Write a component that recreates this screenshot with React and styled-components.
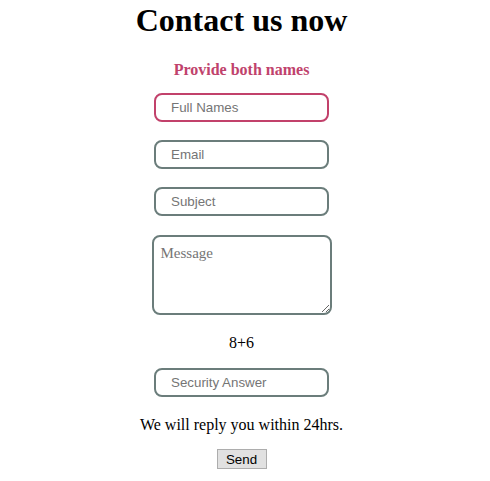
import styled, { createGlobalStyle } from "styled-components";

const GlobalStyle = createGlobalStyle`
  body {
    margin: 0;
    background: #fff;
    font-family: "Liberation Serif", "Times New Roman", serif;
    color: #000;
  }
`;

const ContactStyle = styled.form`
  display: flex;
  flex-direction: column;
  align-items: center;
  padding-right: 7px;

  h1 {
    font-size: 32px;
    font-weight: 700;
    line-height: 37px;
    margin: 2px 0 22px;
  }

  h2 {
    font-size: 16px;
    font-weight: 700;
    line-height: 18px;
    color: #c0426c;
    margin: 0 0 14px;
  }
`;

const Note = styled.p`
  font-size: 16px;
  line-height: 18px;
  margin: 0 0 ${(p) => p.$gap}px;
`;

const Field = styled.input`
  box-sizing: border-box;
  width: 175px;
  height: 29px;
  padding: 0 0 0 15px;
  margin-bottom: ${(p) => p.$gap || 18}px;
  border: 2px solid ${(p) => (p.$invalid ? "#c2416b" : "#6b7d7b")};
  border-radius: 8px;
  font-family: "Liberation Sans", Arial, sans-serif;
  font-size: 13.33px;
  outline: none;

  &::placeholder {
    color: #757575;
  }
`;

const Message = styled.textarea`
  box-sizing: border-box;
  width: 180px;
  height: 80px;
  padding: 8px 7px;
  margin: 0 0 19px;
  border: 2px solid #6b7d7b;
  border-radius: 8px;
  font-family: "Liberation Serif", "Times New Roman", serif;
  font-size: 15px;
  resize: both;
  outline: none;

  &::placeholder {
    color: #757575;
  }
`;

const SendButton = styled.button`
  box-sizing: border-box;
  width: 50px;
  height: 20px;
  padding: 0;
  background: #e1e1e1;
  border: 1px solid #adadad;
  border-radius: 0;
  font-family: "Liberation Sans", Arial, sans-serif;
  font-size: 13.33px;
  color: #000;
`;

export default function App() {
  return (
    <>
      <GlobalStyle />
      <ContactStyle onSubmit={(e) => e.preventDefault()}>
        <h1>Contact us now</h1>
        <h2>Provide both names</h2>
        <Field $invalid placeholder="Full Names" />
        <Field placeholder="Email" />
        <Field $gap={19} placeholder="Subject" />
        <Message placeholder="Message" />
        <Note $gap={16}>8+6</Note>
        <Field $gap={19} placeholder="Security Answer" />
        <Note $gap={15}>We will reply you within 24hrs.</Note>
        <SendButton type="submit">Send</SendButton>
      </ContactStyle>
    </>
  );
}
